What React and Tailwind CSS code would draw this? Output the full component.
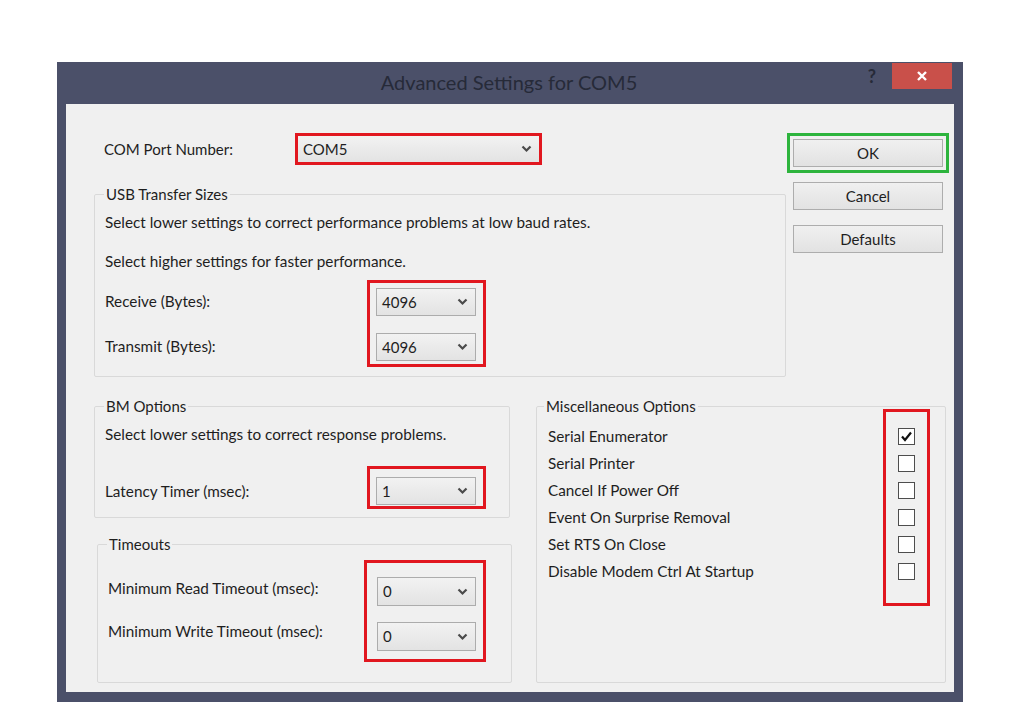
import React from "react";

const font = { fontFamily: "Lato, 'Liberation Sans', sans-serif" };

const Chevron = () => (
  <svg width="11" height="8" viewBox="0 0 11 8" className="shrink-0">
    <path d="M1.5 1.5 L5.5 5.5 L9.5 1.5" fill="none" stroke="#4a4a4a" strokeWidth="2.2" />
  </svg>
);

const Combo = ({ value, className }) => (
  <div
    className={
      "flex items-center justify-between border border-[#acacac] bg-gradient-to-b from-[#f2f2f2] to-[#e3e3e3] pl-[5px] pr-[7px] text-[15px] text-[#1e1e1e] " +
      className
    }
  >
    <span>{value}</span>
    <Chevron />
  </div>
);

const Group = ({ title, className, legendClass, children }) => (
  <fieldset className={"rounded-[2px] border border-[#d9d9d9] " + className}>
    <legend className={"px-[2px] text-[15px] leading-[20px] text-[#1e1e1e] " + legendClass}>{title}</legend>
    {children}
  </fieldset>
);

const Button = ({ children, className }) => (
  <div
    className={
      "flex h-[28px] w-[150px] items-center justify-center border border-[#adadad] bg-gradient-to-b from-[#f0f0f0] to-[#e2e2e2] text-[15px] text-[#1e1e1e] " +
      className
    }
  >
    {children}
  </div>
);

const CheckBox = ({ checked }) => (
  <div className="flex h-[27px] items-center justify-center">
    <div className="flex h-[17px] w-[17px] items-center justify-center border border-[#4d4d4d] bg-white">
      {checked ? (
        <svg width="13" height="13" viewBox="0 0 13 13">
          <path d="M2 6.5 L5 10 L11 2.5" fill="none" stroke="#111" strokeWidth="2.2" />
        </svg>
      ) : null}
    </div>
  </div>
);

const miscItems = [
  "Serial Enumerator",
  "Serial Printer",
  "Cancel If Power Off",
  "Event On Surprise Removal",
  "Set RTS On Close",
  "Disable Modem Ctrl At Startup",
];

export default function App() {
  return (
    <div className="h-[727px] w-[1024px] overflow-hidden bg-white pt-[62px] pl-[57px]" style={font}>
      <div className="flex h-[640px] w-[906px] flex-col bg-[#4b5069] px-[9px] pb-[10px]">
        {/* title bar */}
        <div className="flex h-[42px] items-start">
          <div className="flex-1 pt-[5px] pl-[90px] text-center text-[20px] text-[#262a38]">
            Advanced Settings for COM5
          </div>
          <div className="mr-[8px] w-[20px] pt-[1px] text-center text-[18px] font-bold text-[#262a38]">?</div>
          <div className="mt-[1px] mr-[2px] ml-[2px] flex h-[26px] w-[60px] items-center justify-center bg-[#c9504a]">
            <svg width="12" height="12" viewBox="0 0 12 12">
              <path d="M2 2 L10 10 M10 2 L2 10" stroke="#fff" strokeWidth="2.4" />
            </svg>
          </div>
        </div>

        {/* client area */}
        <div className="flex-1 bg-[#f0f0f0] pt-[29px] pl-[28px]">
          {/* top section */}
          <div className="flex">
            <div className="w-[692px]">
              <div className="flex h-[32px] items-center">
                <div className="w-[201px] pl-[10px] text-[15px] text-[#1e1e1e]">COM Port Number:</div>
                <div className="h-[32px] w-[247px] border-[3px] border-[#e1171f]">
                  <Combo value="COM5" className="h-full border-0 pl-[5px] pr-[7px]" />
                </div>
              </div>
              <Group
                title="USB Transfer Sizes"
                legendClass="-ml-[1px]"
                className="mt-[19px] h-[193px] pl-[10px] text-[15.3px] text-[#1e1e1e]"
              >
                <div className="mt-[5px] flex h-[27px] items-center">Select lower settings to correct performance problems at low baud rates.</div>
                <div className="mt-[12px] flex h-[27px] items-center">Select higher settings for faster performance.</div>
                <div className="mt-[5px] flex">
                  <div className="flex w-[262px] flex-col gap-[17px] pt-[7px]">
                    <div className="flex h-[28px] items-center">Receive (Bytes):</div>
                    <div className="flex h-[28px] items-center">Transmit (Bytes):</div>
                  </div>
                  <div className="flex h-[87px] w-[119px] flex-col gap-[17px] border-[3px] border-[#e1171f] pt-[5px] pl-[6px]">
                    <Combo value="4096" className="h-[28px] w-[100px]" />
                    <Combo value="4096" className="h-[28px] w-[100px]" />
                  </div>
                </div>
              </Group>
            </div>
            <div className="ml-[1px] flex flex-col">
              <div className="flex h-[40px] w-[162px] items-center justify-center border-[3px] border-[#2db43d]">
                <Button className="border-[#78aee3]">OK</Button>
              </div>
              <Button className="mt-[9px] ml-[6px]">Cancel</Button>
              <Button className="mt-[15px] ml-[6px]">Defaults</Button>
            </div>
          </div>

          {/* bottom section */}
          <div className="mt-[19px] flex">
            <div className="w-[418px]">
              <Group
                title="BM Options"
                legendClass="-ml-[1px]"
                className="h-[122px] w-[416px] pl-[10px] text-[15.3px] text-[#1e1e1e]"
              >
                <div className="mt-[6px] flex h-[24px] items-center">Select lower settings to correct response problems.</div>
                <div className="mt-[20px] flex">
                  <div className="w-[262px] pt-[11px]">
                    <div className="flex h-[28px] items-center">Latency Timer (msec):</div>
                  </div>
                  <div className="h-[43px] w-[119px] border-[3px] border-[#e1171f] pt-[8px] pl-[6px]">
                    <Combo value="1" className="h-[28px] w-[100px]" />
                  </div>
                </div>
              </Group>
              <Group
                title="Timeouts"
                legendClass="-ml-[1px]"
                className="mt-[16px] ml-[3px] h-[149px] w-[415px] pl-[10px] text-[15.3px] text-[#1e1e1e]"
              >
                <div className="mt-[6px] flex">
                  <div className="flex w-[256px] flex-col gap-[14px] pt-[14px]">
                    <div className="flex h-[29px] items-center">Minimum Read Timeout (msec):</div>
                    <div className="flex h-[29px] items-center">Minimum Write Timeout (msec):</div>
                  </div>
                  <div className="flex h-[102px] w-[122px] flex-col gap-[16px] border-[3px] border-[#e1171f] pt-[14px] pl-[10px]">
                    <Combo value="0" className="h-[29px] w-[99px]" />
                    <Combo value="0" className="h-[29px] w-[99px]" />
                  </div>
                </div>
              </Group>
            </div>
            <Group
              title="Miscellaneous Options"
              legendClass="ml-[7px]"
              className="ml-[24px] h-[287px] w-[410px] text-[15.3px] text-[#1e1e1e]"
            >
              <div className="-mt-[7px] flex">
                <div className="flex-1 pt-[14px] pl-[11px]">
                  {miscItems.map((item) => (
                    <div key={item} className="flex h-[27px] items-center">
                      {item}
                    </div>
                  ))}
                </div>
                <div className="mr-[15px] h-[197px] w-[47px] border-[3px] border-[#e1171f] pt-[11px]">
                  {miscItems.map((item, i) => (
                    <CheckBox key={item} checked={i === 0} />
                  ))}
                </div>
              </div>
            </Group>
          </div>
        </div>
      </div>
    </div>
  );
}
